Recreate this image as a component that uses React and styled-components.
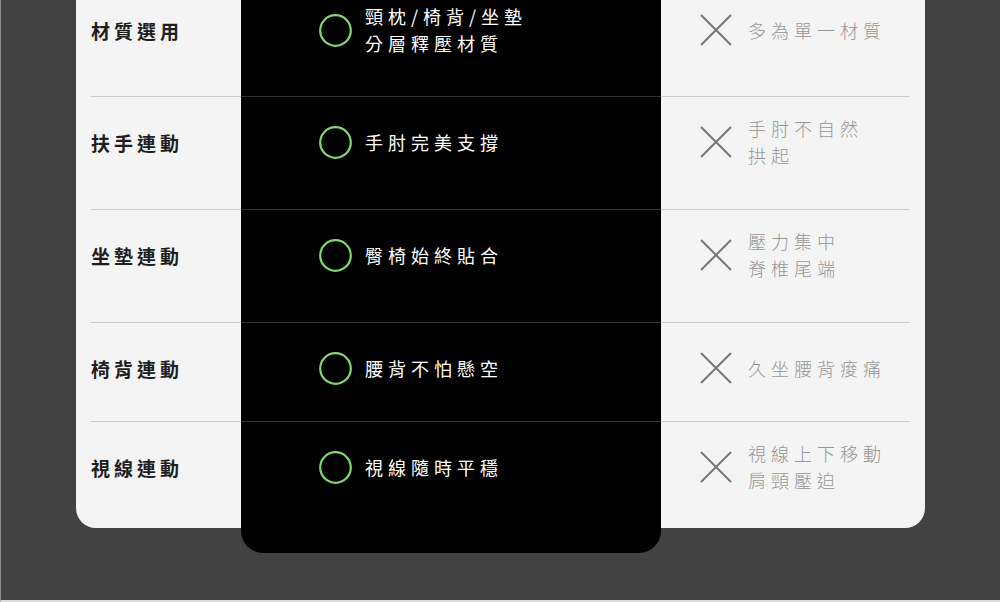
import React from 'react';
import styled, {createGlobalStyle} from 'styled-components';

const GlobalStyle = createGlobalStyle`
  html, body {
    margin: 0;
    padding: 0;
    background: #424242;
  }
`;

const Frame = styled.div`
  width: 1000px;
  height: 602px;
  box-sizing: border-box;
  border-left: 1px solid #8c8c8c;
  border-bottom: 2px solid #dcdcdc;
  background: #424242;
  overflow: hidden;
  display: flex;
  justify-content: center;
  align-items: flex-start;
  font-family: "Noto Sans CJK TC", "Noto Sans", sans-serif;
`;

const Card = styled.div`
  margin-top: -15px;
  width: 849px;
  display: grid;
  grid-template-columns: 165px 420px 1fr;
  background: #f4f4f4;
  border-radius: 0 0 20px 20px;
`;

const Column = styled.div`
  display: flex;
  flex-direction: column;
`;

const FeatureColumn = styled(Column)`
  background: #000;
  border-radius: 0 0 22px 22px;
  margin-bottom: -25px;
`;

const Cell = styled.div`
  height: ${p => p.$h}px;
  box-sizing: border-box;
  padding-top: 27px;
  border-bottom: ${p => (p.$last ? 'none' : `1px solid ${p.$line}`)};
`;

const LabelCell = styled(Cell)`
  margin-left: 15px;
`;

const GoodCell = styled(Cell)`
  padding-left: 78px;
`;

const BadCell = styled(Cell)`
  margin-right: 15px;
  padding-left: 39px;
`;

const Content = styled.div`
  height: 36px;
  display: flex;
  align-items: center;
  gap: ${p => p.$gap || 0}px;
`;

const Label = styled.div`
  font-size: 19px;
  font-weight: 700;
  letter-spacing: 4px;
  color: #1e1e1e;
`;

const Text = styled.div`
  font-size: 18px;
  line-height: 27px;
  letter-spacing: 5px;
  white-space: nowrap;
  color: ${p => (p.$good ? '#fff' : '#969696')};
  font-weight: ${p => (p.$good ? 400 : 300)};
`;

const Circle = () => (
  <svg width="33" height="33" viewBox="0 0 33 33">
    <circle cx="16.5" cy="16.5" r="15.3" fill="none" stroke="#80da6a" strokeWidth="2.2" />
  </svg>
);

const Cross = () => (
  <svg width="32" height="32" viewBox="0 0 32 32">
    <path d="M1 1 L31 31 M31 1 L1 31" stroke="#767676" strokeWidth="2" fill="none" />
  </svg>
);

const rows = [
  {label: '材質選用', good: ['頸枕/椅背/坐墊', '分層釋壓材質'], bad: ['多為單一材質'], h: 112},
  {label: '扶手連動', good: ['手肘完美支撐'], bad: ['手肘不自然', '拱起'], h: 113},
  {label: '坐墊連動', good: ['臀椅始終貼合'], bad: ['壓力集中', '脊椎尾端'], h: 113},
  {label: '椅背連動', good: ['腰背不怕懸空'], bad: ['久坐腰背痠痛'], h: 99},
  {label: '視線連動', good: ['視線隨時平穩'], bad: ['視線上下移動', '肩頸壓迫'], h: 106},
];

const App = () => {
  const last = rows.length - 1;
  return (
    <>
      <GlobalStyle />
      <Frame>
        <Card>
          <Column>
            {rows.map((r, i) => (
              <LabelCell key={r.label} $h={r.h} $last={i === last} $line="#cdcdcd">
                <Content>
                  <Label>{r.label}</Label>
                </Content>
              </LabelCell>
            ))}
          </Column>
          <FeatureColumn>
            {rows.map((r, i) => (
              <GoodCell key={r.label} $h={r.h} $last={i === last} $line="#2f2f2f">
                <Content $gap={13}>
                  <Circle />
                  <Text $good>
                    {r.good.map(t => <div key={t}>{t}</div>)}
                  </Text>
                </Content>
              </GoodCell>
            ))}
          </FeatureColumn>
          <Column>
            {rows.map((r, i) => (
              <BadCell key={r.label} $h={r.h} $last={i === last} $line="#cdcdcd">
                <Content $gap={16}>
                  <Cross />
                  <Text>
                    {r.bad.map(t => <div key={t}>{t}</div>)}
                  </Text>
                </Content>
              </BadCell>
            ))}
          </Column>
        </Card>
      </Frame>
    </>
  );
};

export default App;
